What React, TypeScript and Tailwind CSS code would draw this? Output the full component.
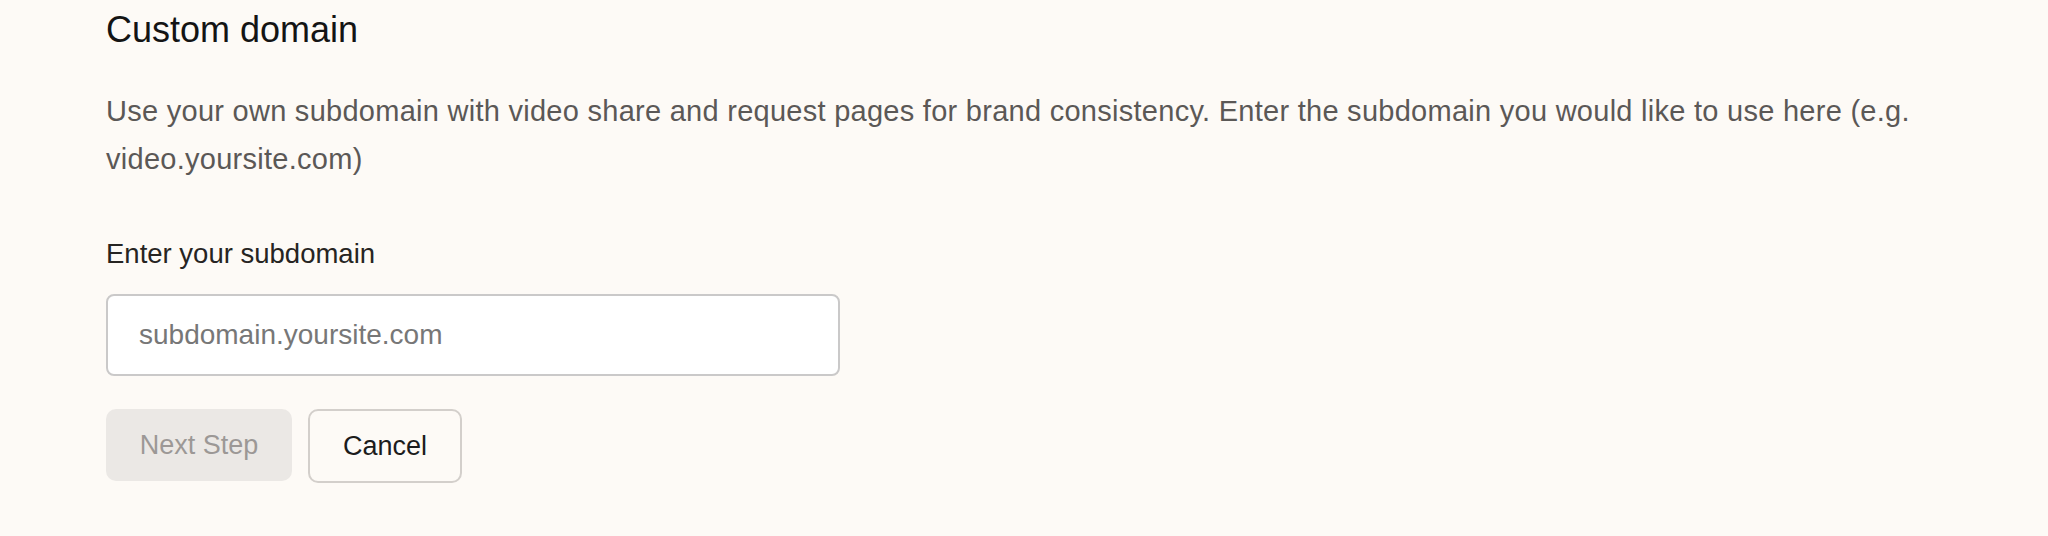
import { useState } from 'react';

export default function App() {
    const [subdomain, setSubdomain] = useState('');

    return (
        <div className="min-h-screen w-full bg-[#fdfaf6] font-['Liberation_Sans',Arial,sans-serif]">
            <div className="pl-[106px] pr-[100px] pt-[9px]">
                {/* Section heading */}
                <h2 className="text-[36px] leading-[42px] text-[#141414]">Custom domain</h2>

                <p className="mt-[36px] max-w-[1840px] text-[29px] leading-[48px] tracking-[0.27px] text-[#5b5856]">
                    Use your own subdomain with video share and request pages for brand consistency. Enter the subdomain you would like to use here (e.g. video.yoursite.com)
                </p>

                {/* Subdomain form */}
                <form
                    className="mt-[53px]"
                    onSubmit={(e) => e.preventDefault()}
                >
                    <label htmlFor="subdomain" className="block text-[27.5px] leading-[36px] text-[#262422]">
                        Enter your subdomain
                    </label>
                    <input
                        id="subdomain"
                        value={subdomain}
                        onChange={(e) => setSubdomain(e.target.value)}
                        placeholder="subdomain.yoursite.com"
                        className="mt-[22px] block h-[82px] w-[734px] rounded-lg border-2 border-[#cac9c9] bg-white pl-[31px] pr-4 text-[28px] text-[#1c1c1c] outline-none placeholder:text-[#777777]"
                    />

                    <div className="mt-[33px] flex items-start gap-[16px]">
                        <button
                            type="submit"
                            disabled={!subdomain}
                            className="flex h-[72px] w-[186px] items-center justify-center rounded-[10px] bg-[#ebe8e5] text-[27px] text-[#9c9896]"
                        >
                            Next Step
                        </button>
                        <button
                            type="button"
                            className="flex h-[74px] w-[154px] items-center justify-center rounded-[10px] border-2 border-[#d3cfcb] bg-[#fdfaf6] text-[27px] text-[#1c1c1c]"
                        >
                            Cancel
                        </button>
                    </div>
                </form>
            </div>
        </div>
    );
}
